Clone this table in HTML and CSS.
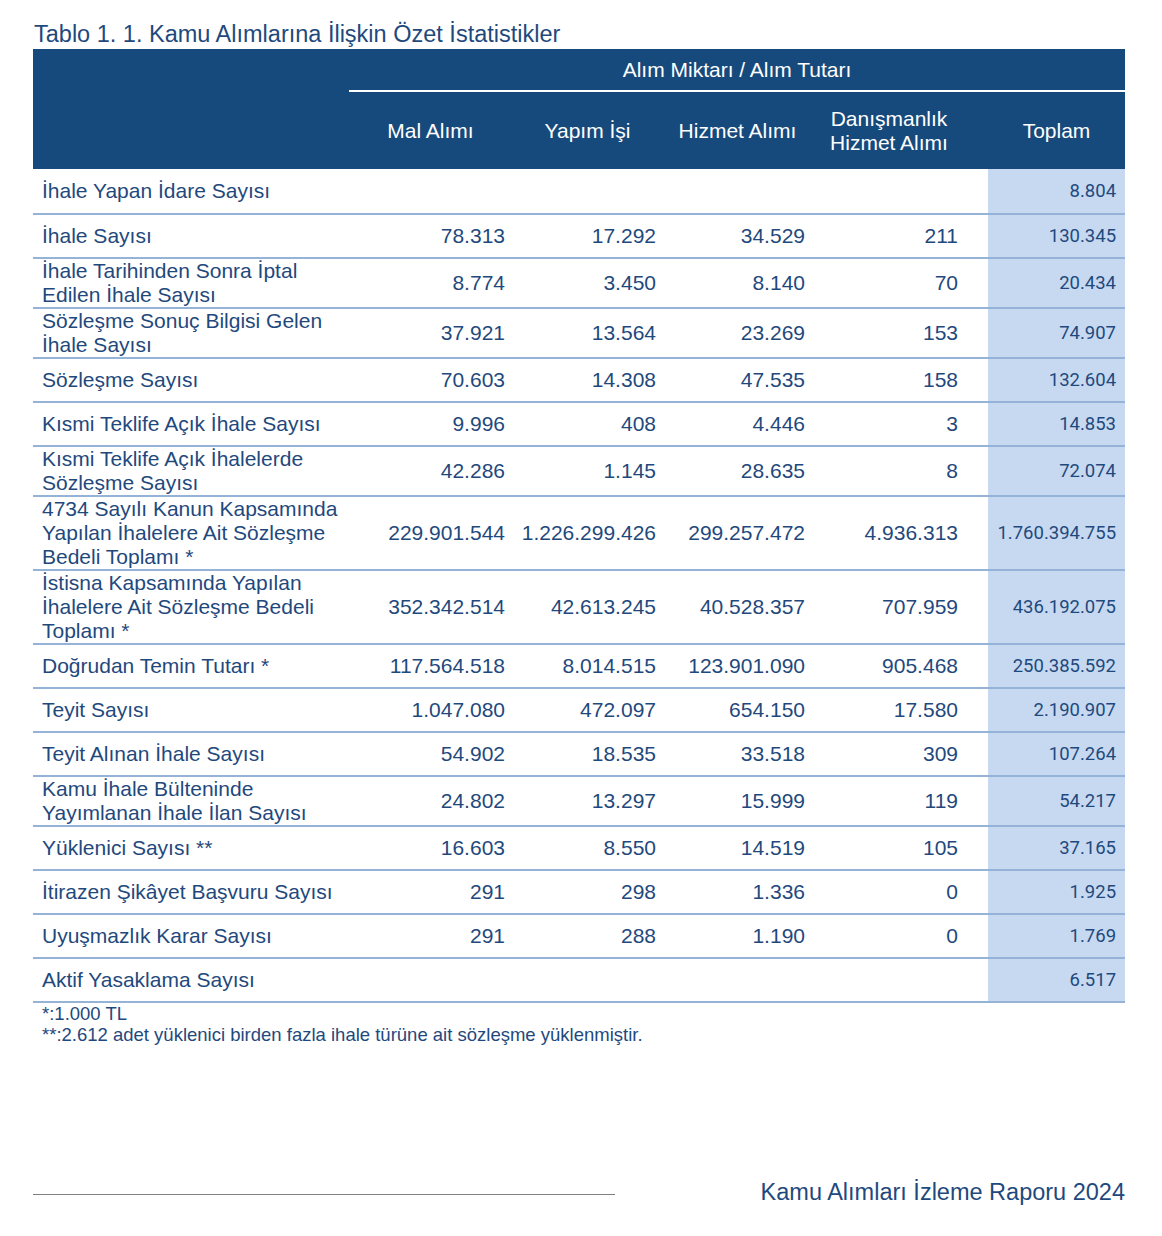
FILE: index.html
```html
<!DOCTYPE html>
<html lang="tr">
<head>
<meta charset="utf-8">
<title>Tablo 1. 1.</title>
<link rel="stylesheet" href="styles.css">
</head>
<body>
<div class="page">
  <h1 class="title">Tablo 1. 1. Kamu Alımlarına İlişkin Özet İstatistikler</h1>
  <table class="stats">
    <colgroup>
      <col class="c-label">
      <col class="c-mal">
      <col class="c-yap">
      <col class="c-hiz">
      <col class="c-dan">
      <col class="c-tot">
    </colgroup>
    <thead>
      <tr class="hrow1">
        <th rowspan="2" class="corner"></th>
        <th colspan="5" class="group">Alım Miktarı / Alım Tutarı</th>
      </tr>
      <tr class="hrow2">
        <th>Mal Alımı</th>
        <th>Yapım İşi</th>
        <th>Hizmet Alımı</th>
        <th class="dan">Danışmanlık<br>Hizmet Alımı</th>
        <th>Toplam</th>
      </tr>
    </thead>
    <tbody>
      <tr class="first"><td class="label">İhale Yapan İdare Sayısı</td><td></td><td></td><td></td><td class="dan"></td><td class="tot">8.804</td></tr>
      <tr><td class="label">İhale Sayısı</td><td>78.313</td><td>17.292</td><td>34.529</td><td class="dan">211</td><td class="tot">130.345</td></tr>
      <tr><td class="label">İhale Tarihinden Sonra İptal<br>Edilen İhale Sayısı</td><td>8.774</td><td>3.450</td><td>8.140</td><td class="dan">70</td><td class="tot">20.434</td></tr>
      <tr><td class="label">Sözleşme Sonuç Bilgisi Gelen<br>İhale Sayısı</td><td>37.921</td><td>13.564</td><td>23.269</td><td class="dan">153</td><td class="tot">74.907</td></tr>
      <tr><td class="label">Sözleşme Sayısı</td><td>70.603</td><td>14.308</td><td>47.535</td><td class="dan">158</td><td class="tot">132.604</td></tr>
      <tr><td class="label">Kısmi Teklife Açık İhale Sayısı</td><td>9.996</td><td>408</td><td>4.446</td><td class="dan">3</td><td class="tot">14.853</td></tr>
      <tr><td class="label">Kısmi Teklife Açık İhalelerde<br>Sözleşme Sayısı</td><td>42.286</td><td>1.145</td><td>28.635</td><td class="dan">8</td><td class="tot">72.074</td></tr>
      <tr><td class="label">4734 Sayılı Kanun Kapsamında<br>Yapılan İhalelere Ait Sözleşme<br>Bedeli Toplamı *</td><td>229.901.544</td><td>1.226.299.426</td><td>299.257.472</td><td class="dan">4.936.313</td><td class="tot">1.760.394.755</td></tr>
      <tr><td class="label">İstisna Kapsamında Yapılan<br>İhalelere Ait Sözleşme Bedeli<br>Toplamı *</td><td>352.342.514</td><td>42.613.245</td><td>40.528.357</td><td class="dan">707.959</td><td class="tot">436.192.075</td></tr>
      <tr><td class="label">Doğrudan Temin Tutarı *</td><td>117.564.518</td><td>8.014.515</td><td>123.901.090</td><td class="dan">905.468</td><td class="tot">250.385.592</td></tr>
      <tr><td class="label">Teyit Sayısı</td><td>1.047.080</td><td>472.097</td><td>654.150</td><td class="dan">17.580</td><td class="tot">2.190.907</td></tr>
      <tr><td class="label">Teyit Alınan İhale Sayısı</td><td>54.902</td><td>18.535</td><td>33.518</td><td class="dan">309</td><td class="tot">107.264</td></tr>
      <tr><td class="label">Kamu İhale Bülteninde<br>Yayımlanan İhale İlan Sayısı</td><td>24.802</td><td>13.297</td><td>15.999</td><td class="dan">119</td><td class="tot">54.217</td></tr>
      <tr><td class="label">Yüklenici Sayısı **</td><td>16.603</td><td>8.550</td><td>14.519</td><td class="dan">105</td><td class="tot">37.165</td></tr>
      <tr><td class="label">İtirazen Şikâyet Başvuru Sayısı</td><td>291</td><td>298</td><td>1.336</td><td class="dan">0</td><td class="tot">1.925</td></tr>
      <tr><td class="label">Uyuşmazlık Karar Sayısı</td><td>291</td><td>288</td><td>1.190</td><td class="dan">0</td><td class="tot">1.769</td></tr>
      <tr><td class="label">Aktif Yasaklama Sayısı</td><td></td><td></td><td></td><td class="dan"></td><td class="tot">6.517</td></tr>
    </tbody>
  </table>
  <div class="notes">
    <p>*:1.000 TL</p>
    <p>**:2.612 adet yüklenici birden fazla ihale türüne ait sözleşme yüklenmiştir.</p>
  </div>
  <footer class="foot">
    <span class="rule"></span>
    <span class="report">Kamu Alımları İzleme Raporu 2024</span>
  </footer>
</div>
</body>
</html>
```

FILE: styles.css
```css
body {
  margin: 0;
  background: #ffffff;
  font-family: "Liberation Sans", Arial, sans-serif;
  color: #1f497d;
}

.page {
  width: 1092px;
  padding: 20px 0 0 33px;
}

.title {
  margin: 0;
  padding-left: 1px;
  font-size: 23.5px;
  font-weight: normal;
  line-height: 29px;
  color: #1f497d;
}

.stats {
  width: 1092px;
  table-layout: fixed;
  border-collapse: separate;
  border-spacing: 0;
}

.c-label { width: 316px; }
.c-mal { width: 163px; }
.c-yap { width: 151px; }
.c-hiz { width: 149px; }
.c-dan { width: 176px; }
.c-tot { width: 137px; }

.stats thead th {
  background: #174a7c;
  color: #ffffff;
  font-weight: normal;
  font-size: 21px;
  line-height: 24px;
  padding: 0;
  text-align: center;
  vertical-align: middle;
}

.hrow1 { height: 43px; }
.hrow2 { height: 77px; }

.stats thead th.group {
  border-bottom: 2px solid #ffffff;
}

.stats thead th.dan {
  padding-right: 22px;
}

.stats tbody tr {
  height: 44px;
}

.stats tbody tr.first {
  height: 46px;
}

.stats tbody td {
  padding: 0 7px 0 0;
  font-size: 21px;
  line-height: 24px;
  text-align: right;
  vertical-align: middle;
  white-space: nowrap;
  border-bottom: 2px solid #95b3d7;
}

.stats tbody td.label {
  text-align: left;
  padding-left: 9px;
}

.stats tbody td.dan {
  padding-right: 30px;
}

.stats tbody td.tot {
  background: #c6d9f1;
  padding-right: 9px;
  font-family: Roboto, "Liberation Sans", sans-serif;
  font-size: 18.5px;
}

.notes {
  padding-left: 9px;
  font-size: 18.5px;
  line-height: 21px;
}

.notes p {
  margin: 0;
}

.foot {
  margin-top: 133px;
  display: flex;
  justify-content: space-between;
  align-items: center;
}

.rule {
  width: 582px;
  height: 1px;
  margin-top: 4px;
  background: #7f7f7f;
}

.report {
  font-size: 23.5px;
  line-height: 28px;
}
```
